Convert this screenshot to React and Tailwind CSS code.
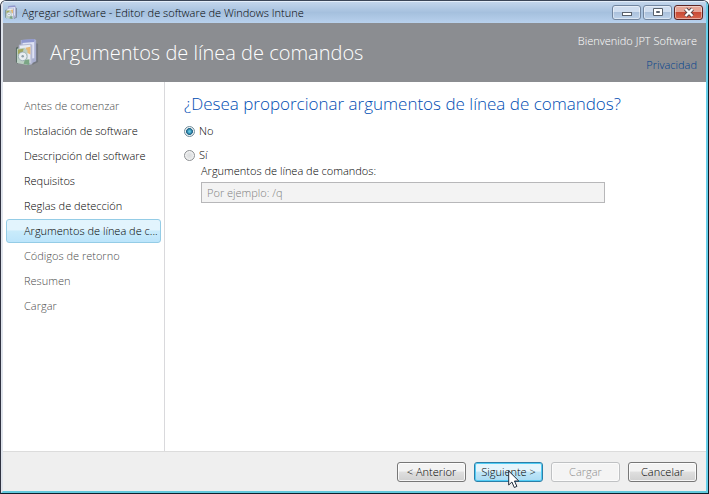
import { useState } from 'react';

const steps = [
  { label: 'Antes de comenzar', state: 'muted' },
  { label: 'Instalación de software', state: 'done' },
  { label: 'Descripción del software', state: 'done' },
  { label: 'Requisitos', state: 'done' },
  { label: 'Reglas de detección', state: 'done' },
  { label: 'Argumentos de línea de c...', state: 'current' },
  { label: 'Códigos de retorno', state: 'muted' },
  { label: 'Resumen', state: 'muted' },
  { label: 'Cargar', state: 'muted' },
];

const stepStyles = {
  muted: 'border-transparent text-[#4c4c4c]',
  done: 'border-transparent text-black',
  current:
    'border-[#94cce6] bg-linear-to-b from-[#e2f4fd] from-45% via-[#c9ebfb] via-50% to-[#bce5fb] text-black',
};

function SoftwareIcon({ className }) {
  return (
    <svg viewBox="0 0 26 30" className={className} aria-hidden="true">
      <path d="M20 5l4 1v19l-6 3z" fill="#666b73" opacity=".6" />
      <path d="M6 2l14-1 2 1v22l-4 2L6 22z" fill="#a9afd0" />
      <path d="M8 4l12-1v18l-12 1z" fill="#dfe3f4" />
      <path d="M7 2l13-1v3L7 5z" fill="#8f98cf" />
      <path d="M4 7l12-1 2 1v20l-3 1-11-3z" fill="#b5bad4" />
      <path d="M5 8l11-1v19l-11-2z" fill="#e8ebf2" />
      <path d="M11 10l5-1v8l-4-2z" fill="#e6b978" />
      <path d="M1 10l2-1v18l-2-2z" fill="#566a62" />
      <path d="M2 11l8-1 3 3v15L2 26z" fill="#bccfc4" />
      <path d="M3 12l6-1-1 4-5 2z" fill="#a3a860" />
      <circle cx="8" cy="19" r="4.500" fill="#e9eef1" stroke="#8fa3aa" strokeWidth=".8" />
      <circle cx="8" cy="19" r="1.300" fill="#8fa0a8" />
      <path d="M10 23l5-1v6l-6-1z" fill="#7ba585" />
    </svg>
  );
}

function CaptionButton({ label, close, children }) {
  return (
    <button
      type="button"
      aria-label={label}
      className={`flex h-[15px] w-[29px] items-center justify-center rounded-[3px] border inset-shadow-[0_0_0_1px_rgba(255,255,255,0.45)] ${
        close
          ? 'border-[#5e2523] bg-linear-to-b from-[#e6a495] from-45% via-[#c94a35] via-50% to-[#d8654d]'
          : 'border-[#7286a0] bg-linear-to-b from-[#d0def0] from-45% via-[#abc1dc] via-50% to-[#bed3eb]'
      }`}
    >
      <svg viewBox="0 0 12 11" className="h-[11px] w-3" aria-hidden="true">
        {children}
      </svg>
    </button>
  );
}

const buttonStyles = {
  normal:
    'border-[#777777] bg-linear-to-b from-[#f3f3f3] from-45% via-[#dfdfdf] via-50% to-[#d0d0d0] text-black inset-shadow-[0_0_0_1px_rgba(255,255,255,0.8)]',
  hot: 'border-[#2c7fa8] bg-linear-to-b from-[#e6f5fc] from-45% via-[#c0e6f8] via-50% to-[#aadbf3] text-black inset-shadow-[0_0_0_1px_#52cdf5]',
  disabled: 'border-[#bfc1c3] bg-[#f4f4f4] text-[#8c8c8c] inset-shadow-[0_0_0_1px_rgba(255,255,255,0.6)]',
};

function WizardButton({ variant = 'normal', children }) {
  return (
    <button
      type="button"
      disabled={variant === 'disabled'}
      className={`h-5 w-[69px] rounded-[3px] border text-[11px] leading-4 whitespace-nowrap ${buttonStyles[variant]}`}
    >
      {children}
    </button>
  );
}

function Choice({ label, checked, onChange }) {
  return (
    <label className="flex h-4 items-center gap-1">
      <input
        type="radio"
        name="argumentos"
        checked={checked}
        onChange={onChange}
        className="size-[11px] appearance-none rounded-full border border-[#8c8f92] bg-radial from-[#dadcde] to-[#f2f2f2] inset-shadow-[0_0_0_1px_#f4f4f4] checked:border-[#6f8c9b] checked:from-[#63cbe8] checked:from-10% checked:via-[#155b80] checked:via-50% checked:to-[#e6eef2] checked:to-60%"
      />
      {label}
    </label>
  );
}

export default function App() {
  const [useArguments, setUseArguments] = useState(false);

  return (
    <div className="flex min-h-screen flex-col overflow-hidden rounded-t-md border border-t-[#3b4658] border-r-[#0d1f2b] border-b-[#0d1f2b] border-l-[#303341] bg-[#efefef] font-['Open_Sans',sans-serif] text-[11px] leading-4 font-[350] text-black">
      <div className="flex grow flex-col border-t border-r-2 border-b-2 border-l-2 border-t-[#e4eefa] border-r-[#67cfe9] border-b-[#62c9dc] border-l-[#dfe4ec]">
        <header className="flex h-[21px] shrink-0 items-center bg-linear-to-b from-[#c2d5eb] via-[#a5c0de] to-[#b8d1ed] pl-[2px]">
          <SoftwareIcon className="mr-1 h-[15px] w-[13px]" />
          <div className="grow truncate text-black">
            Agregar software - Editor de software de Windows Intune
          </div>
          <div className="flex shrink-0 gap-[2px] pr-[3px]">
            <CaptionButton label="Minimizar">
              <rect x="1.5" y="5.5" width="9" height="3" fill="#fff" stroke="#59616c" />
            </CaptionButton>
            <CaptionButton label="Maximizar">
              <path d="M1.500 1.500h9v7h-9z" fill="#fff" stroke="#59616c" />
              <path d="M4.500 4.500h3v1h-3z" fill="#a7bbd4" stroke="#59616c" />
            </CaptionButton>
            <CaptionButton label="Cerrar" close>
              <path d="M2.500 2l7 7M9.500 2l-7 7" stroke="#594346" strokeWidth="4" />
              <path d="M2.500 2l7 7M9.500 2l-7 7" stroke="#fff" strokeWidth="2.400" />
            </CaptionButton>
          </div>
        </header>

        <div className="flex h-[59px] shrink-0 items-center bg-[#8b8d91] pr-[9px] pl-3">
          <SoftwareIcon className="h-[29px] w-[25px] shrink-0" />
          <h1 className="ml-[10px] grow text-[20px] leading-7 font-light whitespace-nowrap text-white">
            Argumentos de línea de comandos
          </h1>
          <div className="flex flex-col items-end gap-2 text-white">
            <span>Bienvenido JPT Software</span>
            <a href="#privacidad" className="text-[#003f8f]">
              Privacidad
            </a>
          </div>
        </div>

        <div className="flex grow bg-white">
          <nav className="w-[162px] shrink-0 border-r border-[#d9d9dc] pt-3 pr-[3px] pl-[3px]">
            <ol className="flex flex-col">
              {steps.map((step) => (
                <li
                  key={step.label}
                  aria-current={step.state === 'current' ? 'step' : undefined}
                  className={`mb-px h-6 rounded-[3px] border pl-[17px] leading-[22px] whitespace-nowrap ${stepStyles[step.state]}`}
                >
                  {step.label}
                </li>
              ))}
            </ol>
          </nav>

          <main className="grow pt-2 pr-5 pl-[19px]">
            <h2 className="text-[17px] leading-7 whitespace-nowrap text-[#004db3]">
              ¿Desea proporcionar argumentos de línea de comandos?
            </h2>
            <div className="mt-[5px] flex flex-col gap-2">
              <Choice label="No" checked={!useArguments} onChange={() => setUseArguments(false)} />
              <Choice label="Sí" checked={useArguments} onChange={() => setUseArguments(true)} />
            </div>
            <div className="flex flex-col gap-[3px] pl-[17px]">
              <label htmlFor="linea">Argumentos de línea de comandos:</label>
              <input
                id="linea"
                type="text"
                disabled={!useArguments}
                placeholder="Por ejemplo: /q"
                className="h-[21px] w-full max-w-[404px] border border-[#b7b7b9] bg-[#f3f3f3] px-[5px] placeholder:text-[#808080]"
              />
            </div>
          </main>
        </div>

        <footer className="flex h-10 shrink-0 items-center justify-end gap-2 border-t border-[#dcdcdc] bg-[#efefef] pr-[9px]">
          <WizardButton>&lt; Anterior</WizardButton>
          <div className="relative flex">
            <WizardButton variant="hot">Siguiente &gt;</WizardButton>
            <svg
              viewBox="0 0 12 19"
              className="pointer-events-none absolute top-2 left-[34px] h-[19px] w-3"
              aria-hidden="true"
            >
              <path
                d="M.7 1v14l3.200-3 2.400 5.500 2.600-1.100-2.400-5.400h4.300z"
                fill="#fff"
                stroke="#222b3b"
                strokeWidth="1"
              />
            </svg>
          </div>
          <WizardButton variant="disabled">Cargar</WizardButton>
          <WizardButton>Cancelar</WizardButton>
        </footer>
      </div>
    </div>
  );
}
